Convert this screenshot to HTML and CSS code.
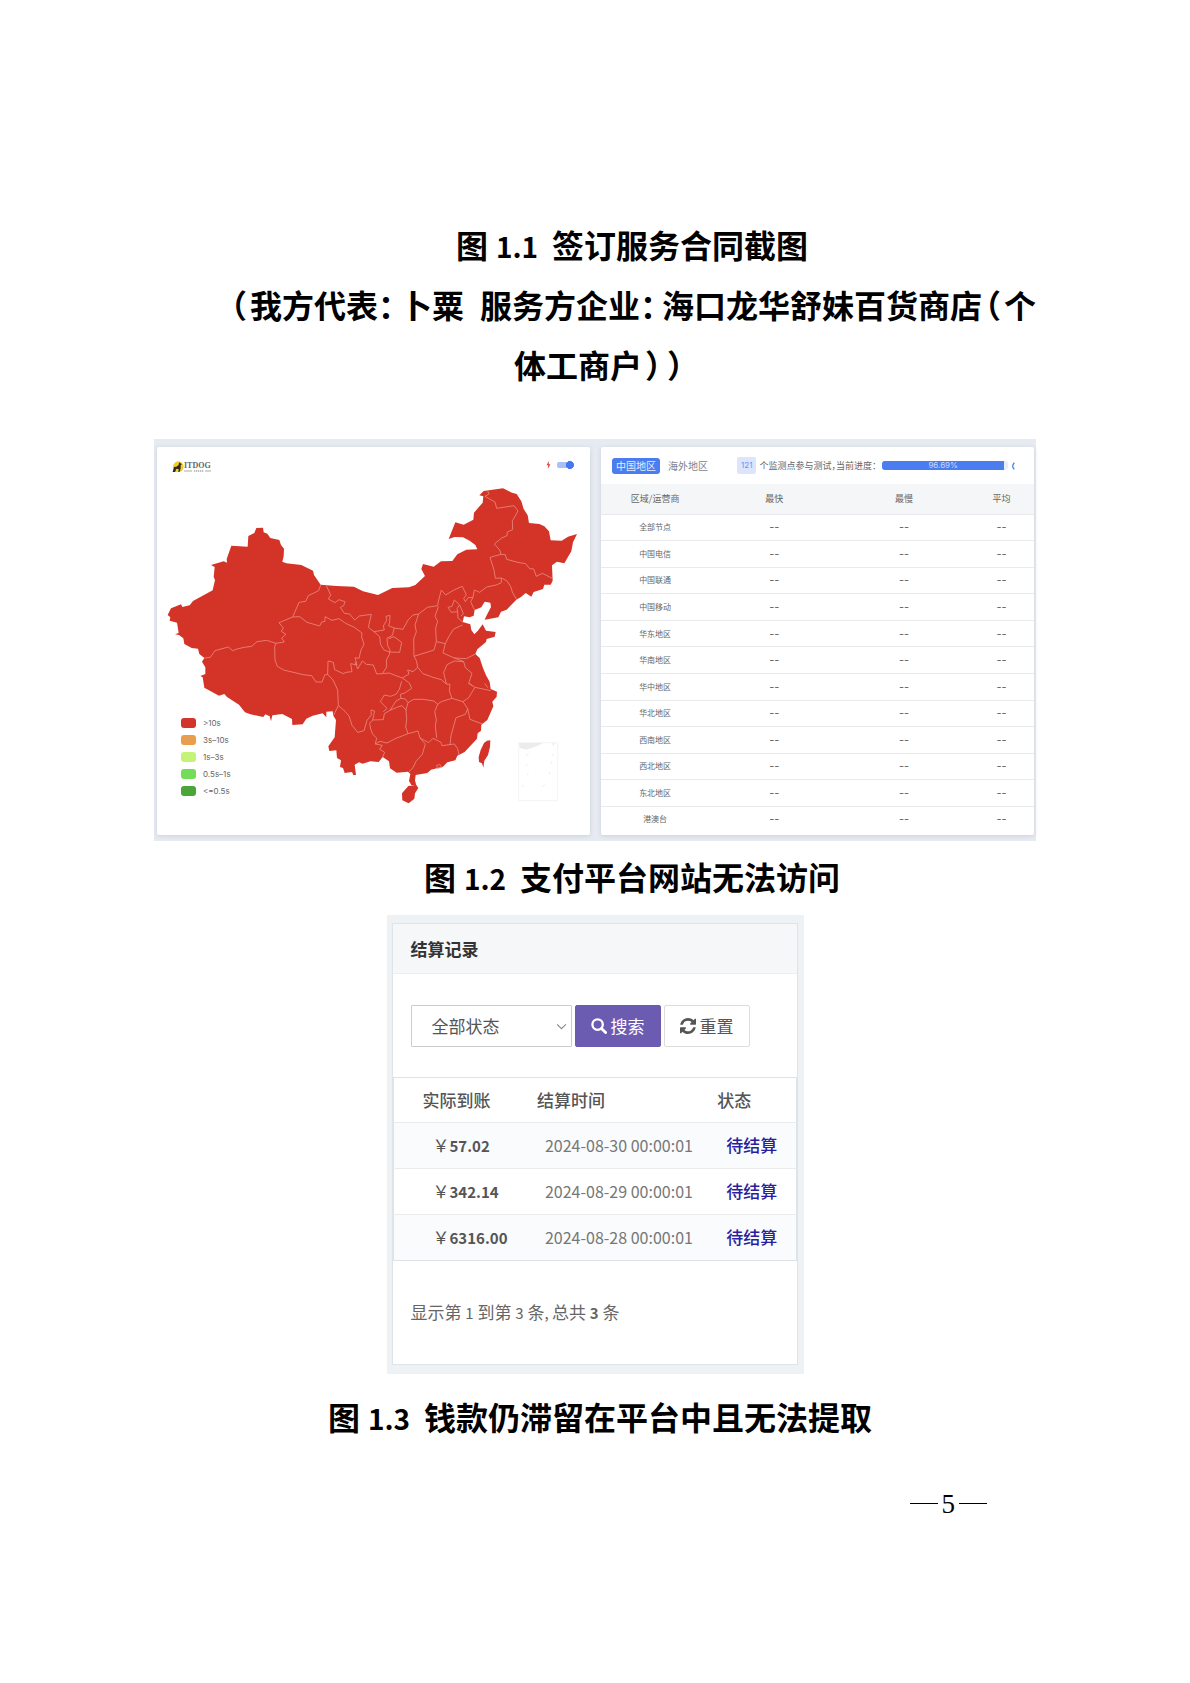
FILE: index.html
```html
<!DOCTYPE html>
<html lang="zh-CN">
<head>
<meta charset="utf-8">
<meta name="viewport" content="width=device-width, initial-scale=1">
<title>图 1.1 – 图 1.3</title>
<link rel="stylesheet" href="styles.css">
</head>
<body>
<main class="page">
  <p class="caption indent">图<span class="num">1.1</span>签订服务合同截图</p>
  <p class="caption indent"><span class="punct">（</span>我方代表<span class="colon">：</span>卜粟&ensp;服务方企业<span class="colon">：</span>海口龙华舒妹百货商店<span class="punct">（</span>个体工商户<span class="punct">）</span><span class="punct">）</span></p>

  <section class="monitor">
    <div class="panel map-panel">
      <div class="map-head">
        <div class="logo">
          <svg class="logo-mark" viewBox="0 0 36 36" aria-hidden="true"><circle cx="19" cy="17" r="16" fill="#f2cc2e"/><path d="M2 33 6 18 13 17 20 12 21 4 25 7 30 9 26 13 26 22 23 32 19 33 20 24 12 24 10 33Z" fill="#2d2a20"/></svg>
          <div class="logo-text"><span class="logo-name">ITDOG</span><svg class="logo-line" viewBox="0 0 84 6" aria-hidden="true"><path d="M1 3H24M30 3H58M64 3H82" stroke="#aaa" stroke-width="4" stroke-dasharray="4 2"/></svg></div>
        </div>
        <label class="toggle"><svg class="bolt" viewBox="0 0 14 24" aria-hidden="true"><path d="M8 0 1 13H6L5 24 13 10H8Z" fill="#df4a4a"/></svg><input type="checkbox" checked aria-label="快速模式"></label>
      </div>
      <svg class="map" viewBox="22 135 1299 1064" role="img" aria-label="中国地图">
        <path class="land" d="M320 279 340 278 342 292 353 296 362 309 389 315 394 330 403 341 402 364 398 380 410 385 455 390 490 407 493 420 513 449 560 453 613 455 640 469 685 480 728 459 778 457 797 450 826 423 815 402 820 387 852 395 874 379 908 378 923 358 950 344 983 343 977 330 960 317 940 307 915 306 897 312 917 262 942 269 971 254 973 233 999 203 1001 184 989 181 1002 168 1060 160 1087 173 1101 177 1115 199 1122 222 1134 241 1138 264 1169 267 1184 274 1198 289 1203 316 1236 317 1255 305 1282 297 1270 322 1265 349 1244 385 1222 380 1207 391 1209 437 1203 449 1184 449 1180 462 1152 471 1145 485 1128 474 1113 487 1100 494 1071 524 1054 530 1046 547 1005 554 1010 543 1024 516 1022 503 1005 500 995 517 975 525 972 542 960 547 943 544 939 561 962 568 965 585 974 598 984 588 999 568 1009 587 1038 591 1035 605 1011 612 1009 621 983 643 977 657 990 669 1000 699 1009 721 1020 740 1023 762 1042 770 1041 785 1028 800 1031 814 1013 855 995 869 994 887 984 895 982 911 945 951 923 962 917 976 893 982 880 995 844 1004 833 1014 798 1020 796 1036 800 1052 785 1050 778 1038 782 1017 775 1010 741 1013 721 1000 718 979 699 966 687 981 662 979 639 986 628 982 615 989 619 1020 611 1020 607 1011 585 1014 580 999 571 996 574 976 562 969 560 946 539 948 536 934 555 907 559 855 551 842 549 829 530 830 530 847 519 835 489 842 470 851 459 868 428 870 427 852 398 837 368 841 364 859 360 844 347 838 341 846 302 838 286 832 268 809 232 786 224 777 208 782 164 758 159 727 152 723 167 717 167 697 157 680 164 669 149 657 145 641 126 639 104 627 101 610 88 600 76 598 87 594 82 563 60 557 62 547 54 540 64 520 94 508 98 516 120 511 130 498 189 466 196 435 192 426 195 396 184 390 222 379 232 383 231 372 245 332 294 335 296 303 314 294Z"/>
        <path class="land" d="M1012 917 1022 916 1021 936 1015 960 1004 977 1001 998 997 985 988 981 987 966 993 945 1003 924Z"/>
        <path class="land" d="M776 1053 800 1050 806 1059 796 1075 794 1091 777 1105 758 1096 757 1075Z"/>
        <g class="borders">
          <path d="M164 669 182 667 196 647 236 636 249 647 262 642 284 637 306 634 322 620 351 616 379 625 404 621 396 609 409 598 395 589 401 579 388 563 429 546 448 502 468 499 476 482 507 467 513 450"/>
          <path d="M429 546 450 545 472 562 510 573 516 561 526 559 526 545 547 556 568 551 588 565 614 577 637 594 636 606 643 628 634 645 628 670 616 668 622 690 603 686 607 710 589 712 581 716 555 704 551 682 535 678 534 718 525 720 517 741 499 741 486 722 460 719 402 705 383 694 376 675 375 635 379 625"/>
          <path d="M530 452 543 480 536 492 556 503 568 494 586 500 582 512 572 517 584 535 600 537 615 555 629 543 665 538 661 555 656 577 673 590 704 585 701 573 711 556 709 544 721 541 720 560 717 573 734 579 728 601 712 610 714 632 721 645 719 659 710 675 711 696 698 716"/>
          <path d="M673 590 690 605 693 629 703 645 719 651 750 652 756 622 733 605 717 611"/>
          <path d="M734 579 760 583 775 555 790 540 807 537 833 517 864 512 866 499 875 465 888 480 913 465 938 454 950 480 942 490 947 500 955 488 970 487 974 465 990 472 1011 456 1040 450 1055 443 1055 429 1037 430 1033 405 1021 367 1054 358 1050 345 1034 327 1056 309 1072 302 1073 291 1089 284 1088 258 1105 228 1093 212 1041 220 1036 201 1006 184 1018 177 1014 168"/>
          <path d="M1054 358 1067 359 1071 373 1104 382 1128 386 1140 401 1152 402 1160 424 1178 415 1208 430M1055 429 1071 437 1083 454 1088 471 1101 494M970 487 963 500 971 518 975 525"/>
          <path d="M895 517 907 514 914 495 930 510 922 520 924 530 905 532ZM924 530 925 549 939 561M930 510 941 535 935 543"/>
          <path d="M807 537 796 570 800 590 792 612 793 664 800 677 804 697 820 716 850 727 875 734 890 747 901 748 899 768 907 790 875 800 864 808 853 798 820 793 792 793 775 803 767 792 754 790 752 778 765 774 786 760 779 744 758 729 718 714 698 716 681 717 671 690 650 688 638 678 624 702 616 681"/>
          <path d="M866 515 856 544 864 559 858 579 860 620 853 645 793 664M860 620 887 626 898 604 912 582 939 570M887 626 880 654 914 669 950 671 977 657"/>
          <path d="M534 718 550 735 564 765 566 812 551 842M566 812 581 824 598 843 607 871 624 892 643 887 652 856 665 840 664 825 675 828 669 855 701 854 704 836 721 826 744 816 757 812 769 825 771 853 768 876 775 896 760 902 739 910 712 924 691 919 677 927 681 909 669 898 663 882 660 865 669 855"/>
          <path d="M701 830 712 820 692 800 704 780 722 784 739 778 749 763 756 739M721 826 739 798 754 790M775 803 769 825M775 896 805 888 811 909 827 927 818 958 799 979 789 1000 778 1010M811 909 837 923 850 910 874 922 877 932 914 927 924 941 928 960M677 927 698 931 690 943 705 952 699 966"/>
          <path d="M864 808 855 830 860 854 857 874 861 909M901 930 904 902 919 848 947 838 954 821 940 800 907 790M954 821 961 853 998 867M940 800 957 788 976 757 1000 762 1023 767M976 757 957 745 967 715 947 698 942 680 914 678 892 689 882 713 890 747M914 669 942 680M957 745 969 752M1005 745 1014 758"/>
          <path d="M774 705 778 717 758 729M774 705 790 710 804 697M861 992 870 988 876 997 863 1000Z"/>
        </g>
        <path d="M1107 923H1224V1097H1107Z" fill="none" stroke="#f4f4f4" stroke-width="3"/>
        <path d="M1108 924H1181L1155 936 1129 944 1110 938ZM1207 925H1216L1211 934Z" fill="#ececec"/>
        <path d="M1129 961 1137 956M1131 987V993M1132 1020 1136 1015M1118 1050 1122 1055M1178 1055 1185 1048M1200 1017V1011M1205 986V979M1210 962V956" stroke="#ececec" stroke-width="3"/>
      </svg>
      <ul class="legend">
        <li><i class="swatch s1"></i>&gt;10s</li>
        <li><i class="swatch s2"></i>3s–10s</li>
        <li><i class="swatch s3"></i>1s–3s</li>
        <li><i class="swatch s4"></i>0.5s–1s</li>
        <li><i class="swatch s5"></i>&lt;=0.5s</li>
      </ul>
    </div>

    <div class="panel">
      <div class="bar">
        <button class="tab active" type="button">中国地区</button>
        <button class="tab" type="button">海外地区</button>
        <span class="count">121</span>
        <span class="status">个监测点参与测试<span class="half">，</span>当前进度<span class="half">：</span></span>
        <div class="progress"><div class="fill" style="width: 96.69%">96.69%</div></div>
        <svg class="spinner" viewBox="0 0 6 12" aria-hidden="true"><path d="M4 2Q0 6 4 10" fill="none" stroke="#4c7df0" stroke-width="1.6"/></svg>
      </div>
      <table class="regions">
        <thead><tr><th>区域/运营商</th><th>最快</th><th>最慢</th><th>平均</th></tr></thead>
        <tbody>
          <tr><td>全部节点</td><td>--</td><td>--</td><td>--</td></tr>
          <tr><td>中国电信</td><td>--</td><td>--</td><td>--</td></tr>
          <tr><td>中国联通</td><td>--</td><td>--</td><td>--</td></tr>
          <tr><td>中国移动</td><td>--</td><td>--</td><td>--</td></tr>
          <tr><td>华东地区</td><td>--</td><td>--</td><td>--</td></tr>
          <tr><td>华南地区</td><td>--</td><td>--</td><td>--</td></tr>
          <tr><td>华中地区</td><td>--</td><td>--</td><td>--</td></tr>
          <tr><td>华北地区</td><td>--</td><td>--</td><td>--</td></tr>
          <tr><td>西南地区</td><td>--</td><td>--</td><td>--</td></tr>
          <tr><td>西北地区</td><td>--</td><td>--</td><td>--</td></tr>
          <tr><td>东北地区</td><td>--</td><td>--</td><td>--</td></tr>
          <tr><td>港澳台</td><td>--</td><td>--</td><td>--</td></tr>
        </tbody>
      </table>
    </div>
  </section>

  <p class="caption indent">图<span class="num">1.2</span>支付平台网站无法访问</p>

  <section class="settle">
    <div class="card">
      <h2 class="card-title">结算记录</h2>
      <form class="filters">
        <div class="select-wrap">
          <select class="select" aria-label="状态"><option>全部状态</option></select>
          <svg class="chevron" viewBox="0 0 12 8" aria-hidden="true"><path d="M1 1.5 6 6.5 11 1.5" fill="none" stroke="#888" stroke-width="1.2"/></svg>
        </div>
        <button class="btn primary" type="button"><svg class="icon" viewBox="0 0 16 16" aria-hidden="true"><circle cx="6.6" cy="6.6" r="5.2" fill="none" stroke="currentColor" stroke-width="2.3"/><path d="M10.4 10.4 14.6 14.6" stroke="currentColor" stroke-width="2.8" stroke-linecap="round"/></svg>搜索</button>
        <button class="btn" type="button"><svg class="icon" viewBox="0 0 1536 1536" aria-hidden="true"><path fill="currentColor" d="M1511 928q0 5-1 7-64 268-268 434.500T764 1536q-146 0-282.500-55T238 1324l-129 129q-19 19-45 19t-45-19-19-45V960q0-26 19-45t45-19h448q26 0 45 19t19 45-19 45l-137 137q71 66 161 102t187 36q134 0 250-65t186-179q11-17 53-117 8-23 30-23h192q13 0 22.500 9.500T1511 928zM1536 128v448q0 26-19 45t-45 19h-448q-26 0-45-19t-19-45 19-45l138-138Q969 256 768 256q-134 0-250 65T332 500q-11 17-53 117-8 23-30 23H50q-13 0-22.500-9.500T18 608v-7q65-268 270-434.500T768 0q146 0 284 55.500T1297 212l130-129q19-19 45-19t45 19 19 45z"/></svg>重置</button>
      </form>
      <table class="records">
        <thead><tr><th>实际到账</th><th>结算时间</th><th>状态</th></tr></thead>
        <tbody>
          <tr><td>￥<b>57.02</b></td><td>2024-08-30 00:00:01</td><td>待结算</td></tr>
          <tr><td>￥<b>342.14</b></td><td>2024-08-29 00:00:01</td><td>待结算</td></tr>
          <tr><td>￥<b>6316.00</b></td><td>2024-08-28 00:00:01</td><td>待结算</td></tr>
        </tbody>
      </table>
      <p class="summary">显示第 <span>1</span> 到第 <span>3</span> 条<span>, </span>总共 <b>3</b> 条</p>
    </div>
  </section>

  <p class="caption">图<span class="num">1.3</span>钱款仍滞留在平台中且无法提取</p>
  <footer class="folio"><i class="dash"></i>5<i class="dash"></i></footer>
</main>
</body>
</html>
```
FILE: styles.css
```css
* {
  box-sizing: border-box;
}

body {
  margin: 0;
  background: #fff;
  color: #000;
  font-family: "Noto Sans CJK SC", sans-serif;
}

button,
select {
  font-family: inherit;
}

.page {
  padding: 214px 154px 160px;
}

.caption {
  margin: 0 -10px 0 0;
  font-size: 32px;
  font-weight: 700;
  line-height: 60px;
  text-align: center;
}

.indent {
  text-indent: 64px;
}

.num {
  padding: 0 14px 0 8px;
  font-size: 28px;
  line-height: 1;
}

.punct {
  padding: 0 3px;
  font-feature-settings: "halt";
}

.colon {
  padding-right: 6px;
  font-feature-settings: "halt";
}

.half {
  font-feature-settings: "halt";
}

/* Monitoring figure */

.monitor {
  display: grid;
  grid-template-columns: 1fr 1fr;
  gap: 11px;
  margin: 45px 0 5px;
  padding: 8px 2px 6px 3px;
  background: #e6eaf1;
}

.panel {
  position: relative;
  border-radius: 2px;
  background: #fff;
  box-shadow: 0 1px 4px #ccd1da;
}

.map-head {
  display: flex;
  align-items: flex-start;
  justify-content: space-between;
  height: 33px;
  padding: 14px 16px 0 15px;
}

.logo {
  display: flex;
  align-items: center;
}

.logo-mark {
  width: 12px;
  height: 12px;
}

.logo-text {
  display: flex;
  flex-direction: column;
}

.logo-name {
  color: #666;
  font: bold 8px/8px "Liberation Serif", serif;
}

.logo-line {
  width: 28px;
  height: 2px;
}

.toggle {
  display: flex;
  align-items: center;
  gap: 6px;
}

.bolt {
  width: 5px;
  height: 8px;
}

.toggle input {
  appearance: none;
  width: 17px;
  height: 8px;
  margin: 0;
  border-radius: 4px;
  background: radial-gradient(circle at 13px 4px, #4478f2 4px, transparent 4px), linear-gradient(#a9c0f7, #a9c0f7) 0 1px / 14px 6px no-repeat;
}

.map {
  display: block;
  width: 100%;
}

.land {
  fill: #d43327;
}

.borders {
  fill: none;
  stroke: #e88880;
  stroke-width: 2.5;
  stroke-linejoin: round;
}

.legend {
  position: absolute;
  bottom: 35px;
  left: 24px;
  margin: 0;
  padding: 0;
  color: #666;
  font-family: Inter, sans-serif;
  font-size: 8px;
  line-height: 17px;
  list-style: none;
}

.legend li {
  display: flex;
  align-items: center;
  gap: 7px;
}

.swatch {
  width: 15px;
  height: 10px;
  border-radius: 3px;
}

.s1 { background: #d2352a; }
.s2 { background: #e99d4e; }
.s3 { background: #c5f377; }
.s4 { background: #73dd59; }
.s5 { background: #4ba639; }

.bar {
  display: flex;
  align-items: center;
  height: 37px;
  padding: 0 18px 0 11px;
}

.tab {
  height: 16px;
  padding: 0 4px;
  border: 0;
  border-radius: 3px;
  background: none;
  color: #7c8492;
  font-size: 10px;
  line-height: 16px;
  white-space: nowrap;
}

.tab.active {
  margin-right: 4px;
  background: #4c7df0;
  color: #e4ecff;
}

.count {
  margin: 0 3px 0 25px;
  padding: 0 4px;
  border-radius: 2px;
  background: #dce5fc;
  color: #6e93f2;
  font: 8px/17px Inter, sans-serif;
}

.status {
  color: #666;
  font-size: 9px;
  line-height: 16px;
  white-space: nowrap;
}

.progress {
  flex: 1;
  margin: 0 3px 0 6px;
  border-radius: 3px;
  background: #e9edf5;
  overflow: hidden;
}

.fill {
  background: #4c7df0;
  color: #c9d8ff;
  font: 8px/9px Inter, sans-serif;
  text-align: center;
}

.spinner {
  width: 5px;
  height: 10px;
}

.regions {
  width: 100%;
  height: 348px;
  border-collapse: collapse;
  table-layout: fixed;
  color: #666;
  font-size: 8px;
  line-height: 12px;
  text-align: center;
}

.regions th {
  width: 30%;
  height: 30px;
  padding: 0;
  background: #f5f6f7;
  font-size: 9px;
  font-weight: 400;
}

.regions th:first-child {
  width: 25%;
}

.regions th:last-child {
  width: 15%;
}

.regions td {
  padding: 0;
  border-top: 1px solid #e8eaed;
}

.regions td + td {
  font-family: Inter, sans-serif;
  font-size: 11px;
}

/* Settlement figure */

.settle {
  width: 417px;
  max-width: 100%;
  margin: 9px auto 12px;
  padding: 8px 6px 9px 5px;
  background: #eef2f4;
}

.card {
  border: 1px solid #dfe4e8;
  background: #fff;
  color: #555;
  font-size: 17px;
}

.card-title {
  margin: 0;
  padding: 0 18px;
  border-bottom: 1px solid #eceff1;
  background: #f5f7f8;
  color: #333;
  font-size: 17px;
  font-weight: 700;
  line-height: 49px;
}

.filters {
  display: flex;
  gap: 3px;
  padding: 31px 18px 30px;
}

.select-wrap {
  position: relative;
  width: 161px;
}

.select {
  appearance: none;
  width: 100%;
  height: 42px;
  padding: 0 20px;
  border: 1px solid #ccc;
  border-radius: 1px;
  background: #fff;
  color: #555;
  font-size: 17px;
}

.chevron {
  position: absolute;
  top: 18px;
  right: 5px;
  width: 11px;
  height: 7px;
}

.btn {
  display: flex;
  align-items: center;
  gap: 4px;
  height: 42px;
  padding: 0 15px;
  border: 1px solid #ddd;
  border-radius: 2px;
  background: #fff;
  color: #555;
  font-size: 17px;
}

.btn.primary {
  border-color: #6b5cb2;
  background: #6b5cb2;
  color: #fff;
}

.icon {
  width: 16px;
  height: 16px;
}

.records {
  width: 100%;
  border: 1px solid #dde2e6;
  border-collapse: collapse;
  table-layout: fixed;
  line-height: 24px;
  text-align: left;
}

.records th {
  padding: 10px 0;
  font-weight: 500;
}

.records th:nth-child(1) {
  width: 33%;
  padding-left: 29px;
}

.records th:nth-child(2) {
  width: 44%;
  padding-left: 11px;
}

.records td {
  height: 46px;
  padding: 0;
  border-top: 1px solid #e8ecef;
  white-space: nowrap;
}

.records td:nth-child(1) {
  padding-left: 39px;
}

.records b,
.summary b,
.summary span {
  font-size: 15px;
  line-height: 1;
}

.records td:nth-child(2) {
  padding-left: 19px;
  color: #777;
  font-size: 16px;
}

.records th:nth-child(3) {
  padding-left: 14px;
}

.records td:nth-child(3) {
  padding-left: 23px;
  color: #2b1fa0;
  font-weight: 500;
}

.records tbody tr:nth-child(odd) {
  background: #f9fbfd;
}

.summary {
  margin: 0;
  padding: 39px 18px 40px;
  color: #666;
  line-height: 24px;
}

.folio {
  display: flex;
  align-items: center;
  justify-content: flex-end;
  gap: 4px;
  margin-top: 43px;
  padding-right: 49px;
  font: 27px/30px "Liberation Serif", serif;
}

.dash {
  width: 28px;
  height: 1px;
  background: #000;
}
```
